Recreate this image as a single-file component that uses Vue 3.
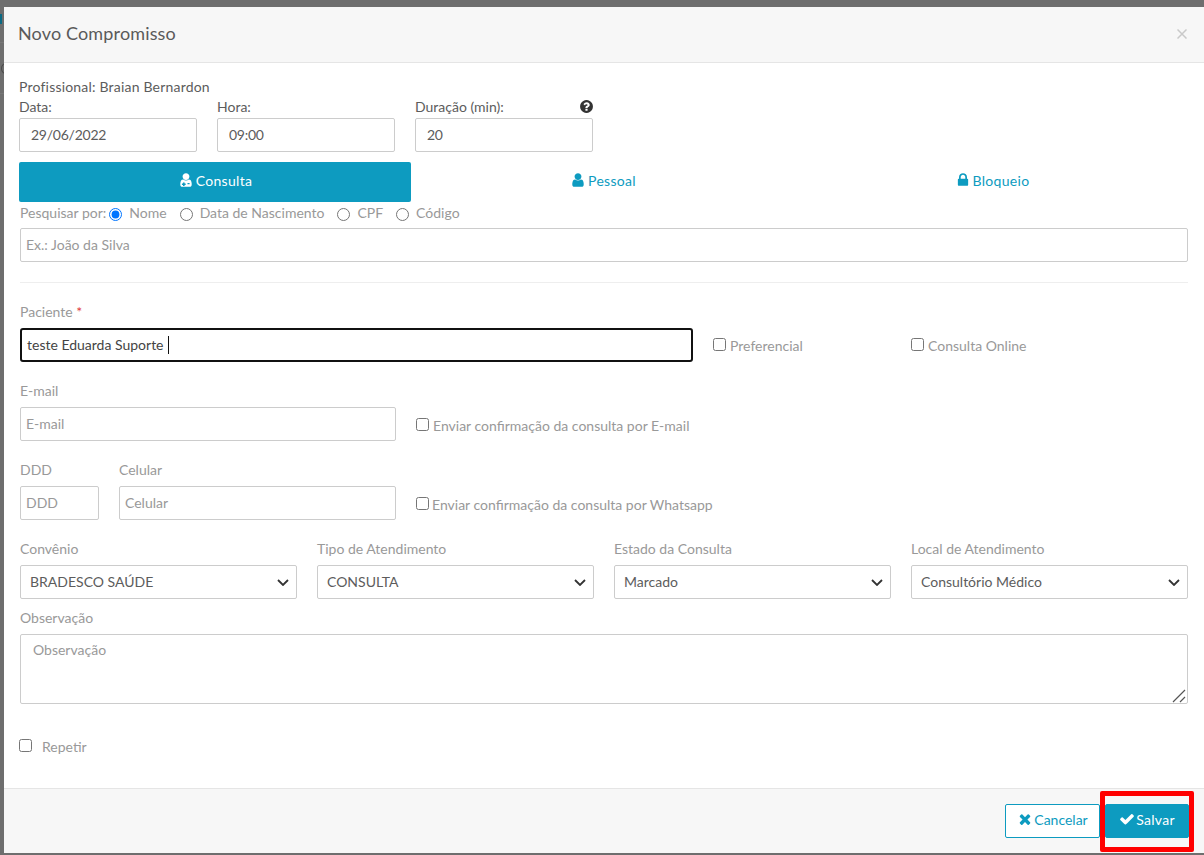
<script setup>
const selects = [
  { label: 'Convênio', value: 'BRADESCO SAÚDE' },
  { label: 'Tipo de Atendimento', value: 'CONSULTA' },
  { label: 'Estado da Consulta', value: 'Marcado' },
  { label: 'Local de Atendimento', value: 'Consultório Médico' }
]
const radios = [
  { label: 'Nome', checked: true },
  { label: 'Data de Nascimento', checked: false },
  { label: 'CPF', checked: false },
  { label: 'Código', checked: false }
]
const userPath = 'M1536 1399q0 109-62.5 187t-150.5 78h-854q-88 0-150.5-78t-62.5-187q0-85 8.5-160.5t31.5-152 58.5-131 94-89 134.5-34.5q131 128 313 128t313-128q76 0 134.5 34.5t94 89 58.5 131 31.5 152 8.5 160.5zm-256-887q0 159-112.5 271.5t-271.5 112.5-271.5-112.5-112.5-271.5 112.5-271.5 271.5-112.5 271.5 112.5 112.5 271.5z'
</script>

<template>
  <div class="page">
    <div class="behind">
      <span class="behind-i"></span>
      <span class="behind-line one"></span>
      <span class="behind-c"></span>
      <span class="behind-line two"></span>
    </div>
    <div class="modal">
      <header class="head">
        <h1>Novo Compromisso</h1>
        <svg class="close" viewBox="0 0 10 10"><path d="M.5.5l9 9M9.5.5l-9 9" stroke="#c9c9c9" stroke-width="1.5" fill="none"/></svg>
      </header>

      <section class="body">
        <div class="prof">Profissional: Braian Bernardon</div>
        <div class="top-row">
          <div class="top-field">
            <label>Data:</label>
            <input class="top-input" value="29/06/2022" />
          </div>
          <div class="top-field">
            <label>Hora:</label>
            <input class="top-input" value="09:00" />
          </div>
          <div class="top-field">
            <label>Duração (min):
              <svg class="help" viewBox="0 0 1792 1792"><path fill="#333" d="M1024 1376v-192q0-14-9-23t-23-9h-192q-14 0-23 9t-9 23v192q0 14 9 23t23 9h192q14 0 23-9t9-23zm256-672q0-88-55.5-163t-138.5-116-170-41q-243 0-371 213-15 24 8 42l132 100q7 6 19 6 16 0 25-12 53-68 86-92 34-24 86-24 48 0 85.5 26t37.5 59q0 38-20 61t-68 45q-63 28-115.5 86.5t-52.5 125.5v36q0 14 9 23t23 9h192q14 0 23-9t9-23q0-19 21.5-49.5t54.5-49.5q32-18 49-28.5t46-35 44.5-48 28-60.5 12.5-81zm384 192q0 209-103 385.5t-279.5 279.5-385.5 103-385.5-103-279.5-279.5-103-385.5 103-385.5 279.5-279.5 385.5-103 385.5 103 279.5 279.5 103 385.5z"/></svg>
            </label>
            <input class="top-input" value="20" />
          </div>
        </div>

        <div class="tabs">
          <div class="tab active">
            <svg class="ico" viewBox="0 0 1792 1792">
              <path fill="currentColor" :d="userPath"/>
              <path fill="#0d9bc0" d="M560 1180h180v120h120v160h-120v120h-180v-120h-120v-160h120z M1060 1240h240v120h-240z"/>
            </svg>
            Consulta
          </div>
          <div class="tab">
            <svg class="ico" viewBox="0 0 1792 1792"><path fill="currentColor" :d="userPath"/></svg>
            Pessoal
          </div>
          <div class="tab">
            <svg class="ico" viewBox="0 0 1792 1792"><path fill="currentColor" d="M640 768h512v-192q0-106-75-181t-181-75-181 75-75 181v192zm832 96v576q0 40-28 68t-68 28h-960q-40 0-68-28t-28-68v-576q0-40 28-68t68-28h32v-192q0-184 132-316t316-132 316 132 132 316v192h32q40 0 68 28t28 68z"/></svg>
            Bloqueio
          </div>
        </div>

        <div class="form">
          <div class="search-by">
            <span class="search-label">Pesquisar por:</span>
            <label v-for="r in radios" :key="r.label" class="radio">
              <input type="radio" name="busca" :checked="r.checked" />
              <span>{{ r.label }}</span>
            </label>
          </div>
          <input class="field" placeholder="Ex.: João da Silva" />
          <hr />

          <label class="lbl paciente-lbl">Paciente <em>*</em></label>
          <div class="row paciente-row">
            <div class="field focused">teste Eduarda Suporte<i class="caret"></i></div>
            <label class="check pref"><input type="checkbox" /><span>Preferencial</span></label>
            <label class="check"><input type="checkbox" /><span>Consulta Online</span></label>
          </div>

          <label class="lbl email-lbl">E-mail</label>
          <div class="row">
            <input class="field w376" placeholder="E-mail" />
            <label class="check conf"><input type="checkbox" /><span>Enviar confirmação da consulta por E-mail</span></label>
          </div>

          <div class="phone-labels">
            <label class="lbl ddd">DDD</label>
            <label class="lbl">Celular</label>
          </div>
          <div class="row">
            <input class="field w79" placeholder="DDD" />
            <input class="field w277" placeholder="Celular" />
            <label class="check conf tight"><input type="checkbox" /><span>Enviar confirmação da consulta por Whatsapp</span></label>
          </div>

          <div class="selects">
            <div v-for="s in selects" :key="s.label">
              <label class="lbl">{{ s.label }}</label>
              <div class="sel-wrap">
                <select class="field sel">
                  <option>{{ s.value }}</option>
                </select>
                <svg class="chev" viewBox="0 0 12 7"><path d="M1 1l5 5 5-5" stroke="#333" stroke-width="1.8" fill="none"/></svg>
              </div>
            </div>
          </div>

          <label class="lbl obs-lbl">Observação</label>
          <div class="obs-wrap">
            <textarea class="obs" placeholder="Observação"></textarea>
            <svg class="grip" viewBox="0 0 14 14"><path d="M1 13L13 1M8 13l5-5" stroke="#555" stroke-width="1.2" fill="none"/></svg>
          </div>

          <label class="check repetir"><input type="checkbox" /><span>Repetir</span></label>
        </div>
      </section>

      <footer class="foot">
        <button class="btn cancel">
          <svg class="ico" viewBox="0 0 1792 1792"><path fill="currentColor" d="M1490 1322q0 40-28 68l-136 136q-28 28-68 28t-68-28l-294-294-294 294q-28 28-68 28t-68-28l-136-136q-28-28-28-68t28-68l294-294-294-294q-28-28-28-68t28-68l136-136q28-28 68-28t68 28l294 294 294-294q28-28 68-28t68 28l136 136q28 28 28 68t-28 68l-294 294 294 294q28 28 28 68z"/></svg>
          Cancelar
        </button>
        <button class="btn save">
          <svg class="ico" viewBox="0 0 1792 1792"><path fill="currentColor" d="M1671 566q0 40-28 68l-724 724-136 136q-28 28-68 28t-68-28l-136-136-362-362q-28-28-28-68t28-68l136-136q28-28 68-28t68 28l294 295 656-657q28-28 68-28t68 28l136 136q28 28 28 68z"/></svg>
          Salvar
        </button>
        <div class="highlight"></div>
      </footer>
    </div>
  </div>
</template>

<style>
html, body {
  margin: 0;
  background: #6e6e6e;
  overflow: hidden;
}
</style>

<style scoped>
.page {
  position: relative;
  width: 1204px;
  height: 855px;
  padding: 7px 0 2px 4px;
  box-sizing: border-box;
  background: #6e6e6e;
  font-family: "Lato", "Liberation Sans", sans-serif;
  font-size: 14px;
  color: #5c5c5c;
  overflow: hidden;
}

.behind {
  position: absolute;
  left: 0;
  top: 0;
  width: 4px;
  height: 100px;
  overflow: hidden;
}

.behind span {
  position: absolute;
  display: block;
}

.behind-i {
  left: 0;
  top: 14px;
  width: 2px;
  height: 10px;
  background: #0b6a84;
}

.behind-line {
  left: 0;
  width: 4px;
  height: 1px;
  background: #777;
}

.behind-line.one {
  top: 42px;
}

.behind-line.two {
  top: 93px;
}

.behind-c {
  left: 1px;
  top: 63px;
  width: 8px;
  height: 9px;
  border: 1px solid #4a4a4a;
  border-radius: 50%;
}

.modal {
  height: 846px;
  background: #fff;
  display: flex;
  flex-direction: column;
}

.head {
  height: 56px;
  flex: none;
  box-sizing: border-box;
  padding: 0 17px 4px 14px;
  background: #f7f7f7;
  border-bottom: 1px solid #e5e5e5;
  display: flex;
  align-items: center;
  justify-content: space-between;
}

.head h1 {
  margin: 0;
  font-size: 18px;
  font-weight: 400;
  letter-spacing: .15px;
  color: #5a5a5a;
}

.close {
  width: 10px;
  height: 10px;
  margin-top: 2px;
}

.body {
  flex: 1;
  padding: 16px 15px 0;
}

.prof {
  line-height: 16px;
  height: 16px;
  letter-spacing: .2px;
}

.top-row {
  display: flex;
  gap: 20px;
  margin-top: 4px;
}

.top-field {
  width: 178px;
}

.top-field label {
  display: flex;
  justify-content: space-between;
  align-items: center;
  height: 16px;
  line-height: 16px;
}

.help {
  width: 15px;
  height: 15px;
  margin: -1px -1px 0 0;
}

.top-input {
  display: block;
  box-sizing: border-box;
  width: 178px;
  height: 34px;
  margin-top: 3px;
  padding: 0 11px 2px;
  border: 1px solid #ccc;
  border-radius: 2px;
  font: inherit;
  letter-spacing: -.25px;
  color: #5c5c5c;
  background: #fff;
}

.tabs {
  display: grid;
  grid-template-columns: 392px 384px 394px;
  margin-top: 10px;
  height: 40px;
}

.tab {
  display: flex;
  align-items: center;
  justify-content: center;
  gap: 2px;
  padding-bottom: 4px;
  box-sizing: border-box;
  color: #0d9bc0;
  letter-spacing: .3px;
  border-radius: 2px;
}

.tab.active {
  background: #0d9bc0;
  color: #fff;
}

.ico {
  width: 16px;
  height: 16px;
  flex: none;
}

.form {
  padding-left: 1px;
}

.search-by {
  display: flex;
  align-items: center;
  height: 24px;
  margin: 0 0 2px;
  color: #999;
}

.search-label {
  margin: -4px 3px 0 0;
}

.radio {
  display: flex;
  align-items: center;
  margin-right: 13px;
}

.radio input {
  margin: 1px 7px 0 0;
  width: 13px;
  height: 13px;
}

.radio span {
  margin-top: -3px;
}

.field {
  display: block;
  box-sizing: border-box;
  width: 1168px;
  height: 34px;
  padding: 0 5px 2px;
  border: 1px solid #ccc;
  border-radius: 2px;
  font: inherit;
  color: #5c5c5c;
  background: #fff;
}

.field::placeholder,
.obs::placeholder {
  color: #999;
  opacity: 1;
}

hr {
  margin: 20px 0 0;
  border: 0;
  border-top: 1px solid #eee;
  width: 1168px;
}

.lbl {
  display: block;
  height: 16px;
  line-height: 16px;
  color: #999;
}

.lbl em {
  color: #e04040;
  font-style: normal;
}

.paciente-lbl {
  margin-top: 21px;
}

.row {
  display: flex;
  align-items: center;
  margin-top: 8px;
}

.focused {
  width: 673px;
  line-height: 30px;
  border: 2px solid #111;
  border-radius: 3px;
  padding: 0 5px;
  color: #444;
  display: flex;
  align-items: center;
}

.caret {
  width: 1px;
  height: 18px;
  margin-left: 4px;
  background: #111;
}

.check {
  display: flex;
  align-items: center;
  color: #999;
}

.check input {
  margin: 0 4px 0 0;
  width: 13px;
  height: 13px;
}

.check span {
  padding-top: 2px;
}

.paciente-row .check input {
  margin-bottom: 2px;
}

.paciente-row .check span {
  padding-top: 0;
}

.pref {
  margin-left: 20px;
  width: 198px;
}

.email-lbl {
  margin-top: 21px;
}

.w376 {
  width: 376px;
}

.w79 {
  width: 79px;
}

.w277 {
  width: 277px;
  margin-left: 20px;
}

.conf {
  margin-left: 20px;
}

.conf.tight input {
  margin-right: 3px;
}

.phone-labels {
  display: flex;
  margin-top: 21px;
}

.ddd {
  width: 99px;
}

.selects {
  display: grid;
  grid-template-columns: repeat(4, 277px);
  gap: 20px;
  margin-top: 21px;
}

.selects .lbl {
  margin-bottom: 8px;
}

.sel-wrap {
  position: relative;
}

.sel {
  width: 277px;
  padding: 0 9px 2px;
  appearance: none;
  color: #5c5c5c;
}

.chev {
  position: absolute;
  right: 8px;
  top: 14px;
  width: 12px;
  height: 7px;
  pointer-events: none;
}

.obs-lbl {
  margin-top: 11px;
}

.obs-wrap {
  position: relative;
  width: 1168px;
  margin-top: 8px;
}

.obs {
  display: block;
  box-sizing: border-box;
  width: 1168px;
  height: 70px;
  padding: 6px 12px;
  border: 1px solid #ccc;
  border-radius: 2px;
  font: inherit;
  color: #555;
  resize: none;
}

.grip {
  position: absolute;
  right: 2px;
  bottom: 1px;
  width: 14px;
  height: 14px;
}

.repetir {
  margin-top: 32px;
  margin-left: -1px;
}

.repetir input {
  margin-right: 10px;
}

.foot {
  position: relative;
  flex: none;
  height: 65px;
  box-sizing: border-box;
  padding: 15px 15px 0 0;
  background: #f7f7f7;
  border-top: 1px solid #e5e5e5;
  display: flex;
  justify-content: flex-end;
  align-items: flex-start;
  gap: 5px;
}

.btn {
  height: 34px;
  box-sizing: border-box;
  padding: 0 0 4px;
  border-radius: 2px;
  font: inherit;
  display: flex;
  align-items: center;
  justify-content: center;
  gap: 1px;
}

.cancel {
  width: 95px;
  background: #fff;
  border: 1px solid #0d9bc0;
  color: #0d9bc0;
}

.save {
  width: 84px;
  background: #0d9bc0;
  border: 1px solid #0d9bc0;
  color: #fff;
  letter-spacing: .3px;
}

.highlight {
  position: absolute;
  left: 1096px;
  top: 2px;
  width: 94px;
  height: 61px;
  box-sizing: border-box;
  border: 5px solid #f00;
  border-radius: 2px;
}
</style>
